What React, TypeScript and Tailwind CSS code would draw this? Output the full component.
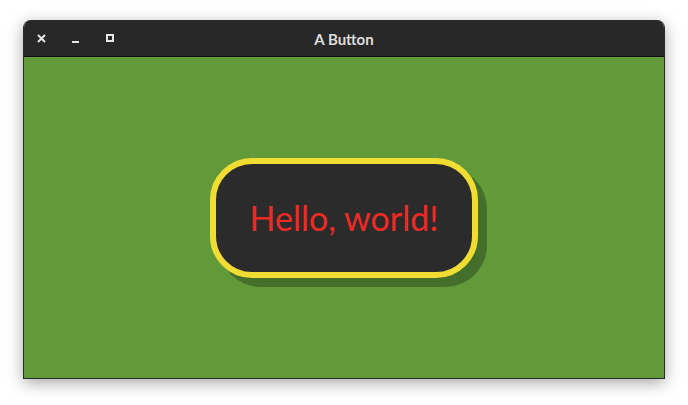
export default function App() {
  return (
    <div className="w-[688px] h-[405px] bg-white pl-[23px] pt-[20px]" style={{ fontFamily: "Lato, 'Noto Sans', sans-serif" }}>
      <div className="w-[642px] h-[359px] flex flex-col rounded-t-[8px] overflow-hidden border-x border-b border-[#2a2a2a] shadow-[0_4px_16px_rgba(0,0,0,0.35)]">
        {/* Title bar */}
        <div className="h-[37px] bg-[#282828] border-b border-[#111] flex items-center relative shrink-0">
          <div className="flex items-center pl-[13px]">
            <svg width="9" height="9" viewBox="0 0 9 9" className="mt-[1px]">
              <path d="M1 1 L8 8 M8 1 L1 8" stroke="#e6e6e6" strokeWidth="2" />
            </svg>
            <svg width="7" height="9" viewBox="0 0 7 9" className="ml-[26px] mt-[1px]">
              <rect x="0" y="7" width="7" height="2" fill="#e6e6e6" />
            </svg>
            <svg width="8" height="8" viewBox="0 0 8 8" className="ml-[27px]">
              <rect x="1" y="1" width="6" height="6" fill="none" stroke="#e6e6e6" strokeWidth="2" />
            </svg>
          </div>
          <div className="absolute inset-0 pt-[2px] flex items-center justify-center text-[15px] font-bold text-[#dedede]">
            A Button
          </div>
        </div>
        {/* Content */}
        <div className="flex-1 bg-[#629a3a] flex items-center justify-center">
          <div className="w-[268px] h-[120px] rounded-[42px] border-[6px] border-[#f0dc32] bg-[#2b2b2b] shadow-[9px_9px_0_#436f2a] flex items-center justify-center">
            <span className="text-[34px] text-[#ef2a24] leading-none">Hello, world!</span>
          </div>
        </div>
      </div>
    </div>
  );
}
